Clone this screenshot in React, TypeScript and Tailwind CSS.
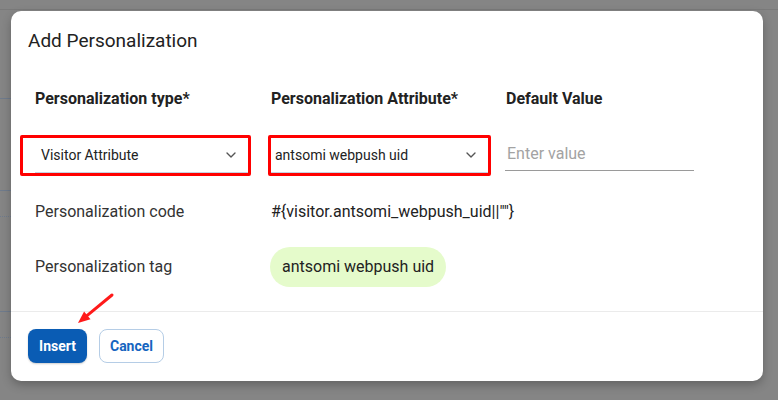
import { ChevronDown } from "lucide-react";

const font = { fontFamily: "Roboto, 'Liberation Sans', sans-serif" };

function Select({ value, padLeft }: { value: string; padLeft: string }) {
  return (
    <div className="flex h-[35px] items-center justify-between border-b border-[#c5d3e3]">
      <span className={`text-[14px] text-[#222] ${padLeft}`}>{value}</span>
      <ChevronDown className="mr-[9px] h-[16px] w-[16px] text-[#555]" strokeWidth={2} />
    </div>
  );
}

export default function App() {
  return (
    <div className="relative h-[400px] w-[778px] overflow-hidden bg-[#858585] pl-[11px] pt-[11px]" style={font}>
      {/* page behind the overlay */}
      <div className="absolute left-0 right-0 top-[9px] h-px bg-[#7a7a7a]" />
      <div className="absolute left-0 top-[98px] h-px w-[11px] bg-[#6f7b8c]" />
      <div className="absolute left-0 top-[190px] h-px w-[11px] bg-[#6f7b8c]" />
      <div className="absolute left-0 top-[216px] w-[11px] border-t border-dotted border-[#6f7b8c]" />
      <div className="absolute left-0 top-[311px] h-px w-[11px] bg-[#6f7b8c]" />
      <div className="absolute left-0 top-[337px] w-[11px] border-t border-dotted border-[#6f7b8c]" />

      {/* dialog */}
      <div className="relative flex h-[370px] w-[752px] flex-col rounded-[10px] bg-white shadow-[0_4px_10px_rgba(0,0,0,0.25)]">
        <h2 className="pl-[17px] pt-[18px] text-[19px] leading-[24px] text-[#222]">Add Personalization</h2>

        <div className="grid grid-cols-[236px_235px_200px] pl-[24px] pt-[36px] text-[16px] font-bold leading-[20px] text-[#222]">
          <span>Personalization type*</span>
          <span>Personalization Attribute*</span>
          <span>Default Value</span>
        </div>

        <div className="grid grid-cols-[236px_235px_200px] pl-[24px] pt-[26px]">
          <div className="-ml-[15px] h-[41px] w-[231px] rounded-[2px] border-[3px] border-[#ff0000] pl-[12px]">
            <Select value="Visitor Attribute" padLeft="pl-[6px]" />
          </div>
          <div className="-ml-[3px] h-[41px] w-[223px] rounded-[2px] border-[3px] border-[#ff0000]">
            <Select value="antsomi webpush uid" padLeft="pl-[4px]" />
          </div>
          <div className="-ml-[1px] w-[189px] pt-[3px]">
            <div className="flex h-[33px] items-center border-b border-[#9a9a9a] pl-[2px] text-[16px] text-[#a3a3a3]">
              Enter value
            </div>
          </div>
        </div>

        <div className="grid grid-cols-[236px_1fr] items-center pl-[24px] pt-[16px] text-[16px] leading-[40px]">
          <span className="text-[#333]">Personalization code</span>
          <span className="text-[#222]">#{"{"}visitor.antsomi_webpush_uid||""{"}"}</span>
        </div>

        <div className="grid grid-cols-[235px_1fr] items-center pl-[24px] pt-[15px] text-[16px]">
          <span className="text-[#333]">Personalization tag</span>
          <div>
            <span className="inline-flex h-[40px] items-center rounded-full bg-[#e5fbcb] px-[12px] text-[#222]">
              antsomi webpush uid
            </span>
          </div>
        </div>

        <div className="mt-[24px] border-t border-[#ebebeb]" />

        <div className="flex gap-[12px] pl-[17px] pt-[17px]">
          <button className="h-[34px] w-[59px] rounded-[8px] bg-[#0a5cb4] text-[14px] font-bold text-white shadow-[0_1px_2px_rgba(0,0,0,0.2)]">
            Insert
          </button>
          <button className="h-[34px] w-[65px] rounded-[8px] border border-[#b5cde6] bg-white text-[14px] font-bold text-[#1565c0]">
            Cancel
          </button>
        </div>

        {/* red annotation arrow */}
        <svg className="absolute left-[60px] top-[278px]" width="60" height="40" viewBox="0 0 60 40">
          <line x1="41" y1="6" x2="16.3" y2="26.4" stroke="#ff1a1a" strokeWidth="3" strokeLinecap="round" />
          <polygon points="7,34 19.5,30.3 13.1,22.5" fill="#ff1a1a" />
        </svg>
      </div>
    </div>
  );
}
